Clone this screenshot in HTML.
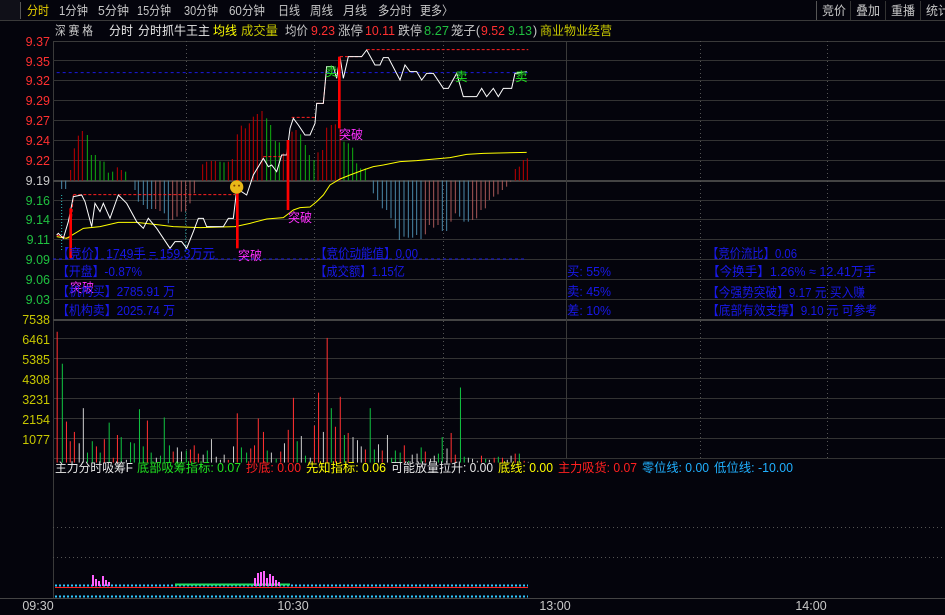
<!DOCTYPE html>
<html><head><meta charset="utf-8"><style>
body{margin:0;background:#04040c;width:945px;height:615px;overflow:hidden;}
svg text{font-family:"Liberation Sans","Noto Sans CJK SC",sans-serif;}
</style></head><body>
<svg width="945" height="615" style="position:absolute;left:0;top:0">
<rect width="945" height="615" fill="#04040c"/>
<rect x="0" y="0" width="20" height="20" fill="#101018"/>
<line x1="0" y1="20.5" x2="945" y2="20.5" stroke="#3a3a3a"/>
<line x1="20.5" y1="2" x2="20.5" y2="19" stroke="#555"/>
<line x1="816.5" y1="1" x2="816.5" y2="20" stroke="#555"/>
<line x1="850.5" y1="1" x2="850.5" y2="20" stroke="#333"/>
<line x1="885.5" y1="1" x2="885.5" y2="20" stroke="#333"/>
<line x1="920.5" y1="1" x2="920.5" y2="20" stroke="#333"/>
<g font-size="12.5" fill="#c8c8c8" lengthAdjust="spacingAndGlyphs">
<text x="27" y="15" fill="#e8d000" textLength="22" lengthAdjust="spacingAndGlyphs">分时</text>
<text x="59" y="15" textLength="29" lengthAdjust="spacingAndGlyphs">1分钟</text>
<text x="98" y="15" textLength="31" lengthAdjust="spacingAndGlyphs">5分钟</text>
<text x="137" y="15" textLength="34" lengthAdjust="spacingAndGlyphs">15分钟</text>
<text x="184" y="15" textLength="34" lengthAdjust="spacingAndGlyphs">30分钟</text>
<text x="229" y="15" textLength="36" lengthAdjust="spacingAndGlyphs">60分钟</text>
<text x="278" y="15" textLength="22" lengthAdjust="spacingAndGlyphs">日线</text>
<text x="310" y="15" textLength="23" lengthAdjust="spacingAndGlyphs">周线</text>
<text x="343" y="15" textLength="24" lengthAdjust="spacingAndGlyphs">月线</text>
<text x="378" y="15" textLength="34" lengthAdjust="spacingAndGlyphs">多分时</text>
<text x="420" y="15" textLength="33" lengthAdjust="spacingAndGlyphs">更多〉</text>
<text x="822" y="15" textLength="24" lengthAdjust="spacingAndGlyphs">竞价</text>
<text x="856" y="15" textLength="24" lengthAdjust="spacingAndGlyphs">叠加</text>
<text x="891" y="15" textLength="24" lengthAdjust="spacingAndGlyphs">重播</text>
<text x="926" y="15" textLength="24" lengthAdjust="spacingAndGlyphs">统计</text>
</g>
<g font-size="12.5">
<text x="55" y="35" fill="#c8c8c8" textLength="38" lengthAdjust="spacingAndGlyphs">深 赛 格</text>
<text x="109" y="35" fill="#e8e8e8" textLength="24" lengthAdjust="spacingAndGlyphs">分时</text>
<text x="138" y="35" fill="#e8e8e8" textLength="72" lengthAdjust="spacingAndGlyphs">分时抓牛王主</text>
<text x="213" y="35" fill="#ffff00" textLength="24" lengthAdjust="spacingAndGlyphs">均线</text>
<text x="241" y="35" fill="#c8c800" textLength="37" lengthAdjust="spacingAndGlyphs">成交量</text>
<text x="285" y="35" fill="#c8c8c8" textLength="23" lengthAdjust="spacingAndGlyphs">均价</text>
<text x="311" y="35" fill="#ff3030" textLength="24" lengthAdjust="spacingAndGlyphs">9.23</text>
<text x="338" y="35" fill="#c8c8c8" textLength="25" lengthAdjust="spacingAndGlyphs">涨停</text>
<text x="365" y="35" fill="#ff3030" textLength="30" lengthAdjust="spacingAndGlyphs">10.11</text>
<text x="398" y="35" fill="#c8c8c8" textLength="24" lengthAdjust="spacingAndGlyphs">跌停</text>
<text x="424" y="35" fill="#20c040" textLength="25" lengthAdjust="spacingAndGlyphs">8.27</text>
<text x="451" y="35" fill="#c8c8c8" textLength="29" lengthAdjust="spacingAndGlyphs">笼子(</text>
<text x="481" y="35" fill="#ff3030" textLength="24" lengthAdjust="spacingAndGlyphs">9.52</text>
<text x="508" y="35" fill="#20c040" textLength="24" lengthAdjust="spacingAndGlyphs">9.13</text>
<text x="533" y="35" fill="#c8c8c8">)</text>
<text x="540" y="35" fill="#c8c800" textLength="72" lengthAdjust="spacingAndGlyphs">商业物业经营</text>
</g>
<line x1="53" y1="41.5" x2="945" y2="41.5" stroke="#3a3a3a"/>
<line x1="53.5" y1="41" x2="53.5" y2="598" stroke="#3a3a3a"/>
<g stroke="#333">
<line x1="53" y1="60.5" x2="945" y2="60.5"/><line x1="53" y1="80.5" x2="945" y2="80.5"/>
<line x1="53" y1="100.5" x2="945" y2="100.5"/><line x1="53" y1="120.5" x2="945" y2="120.5"/>
<line x1="53" y1="140.5" x2="945" y2="140.5"/><line x1="53" y1="160.5" x2="945" y2="160.5"/>
<line x1="53" y1="200.5" x2="945" y2="200.5"/><line x1="53" y1="219.5" x2="945" y2="219.5"/>
<line x1="53" y1="239.5" x2="945" y2="239.5"/><line x1="53" y1="259.5" x2="945" y2="259.5"/>
<line x1="53" y1="279.5" x2="945" y2="279.5"/><line x1="53" y1="299.5" x2="945" y2="299.5"/>
<line x1="53" y1="338.5" x2="945" y2="338.5"/><line x1="53" y1="358.5" x2="945" y2="358.5"/>
<line x1="53" y1="378.5" x2="945" y2="378.5"/><line x1="53" y1="398.5" x2="945" y2="398.5"/>
<line x1="53" y1="418.5" x2="945" y2="418.5"/><line x1="53" y1="438.5" x2="945" y2="438.5"/>
<line x1="53" y1="458.5" x2="945" y2="458.5"/>
</g>
<line x1="53" y1="181" x2="945" y2="181" stroke="#444" stroke-width="2"/>
<line x1="53" y1="320" x2="945" y2="320" stroke="#444" stroke-width="2"/>
<line x1="0" y1="598.5" x2="945" y2="598.5" stroke="#444"/>
<line x1="566.5" y1="41" x2="566.5" y2="458" stroke="#3a3a3a"/>
<g stroke="#555" stroke-dasharray="1,3">
<line x1="186.5" y1="41" x2="186.5" y2="458"/><line x1="314.5" y1="41" x2="314.5" y2="458"/>
<line x1="443.5" y1="41" x2="443.5" y2="458"/><line x1="700.5" y1="41" x2="700.5" y2="458"/>
<line x1="827.5" y1="41" x2="827.5" y2="458"/>
<line x1="53" y1="527.5" x2="945" y2="527.5"/><line x1="53" y1="557.5" x2="945" y2="557.5"/>
</g>
<g font-size="12.5" text-anchor="end">
<g fill="#ff3030"><text x="50" y="46">9.37</text><text x="50" y="66">9.35</text><text x="50" y="85">9.32</text><text x="50" y="105">9.29</text><text x="50" y="125">9.27</text><text x="50" y="145">9.24</text><text x="50" y="165">9.22</text></g>
<text x="50" y="185" fill="#c8c8c8">9.19</text>
<g fill="#20c040"><text x="50" y="205">9.16</text><text x="50" y="224">9.14</text><text x="50" y="244">9.11</text><text x="50" y="264">9.09</text><text x="50" y="284">9.06</text><text x="50" y="304">9.03</text></g>
<g fill="#c8c800"><text x="50" y="324">7538</text><text x="50" y="344">6461</text><text x="50" y="364">5385</text><text x="50" y="384">4308</text><text x="50" y="404">3231</text><text x="50" y="424">2154</text><text x="50" y="444">1077</text></g>
</g>
<g transform="translate(50,35) scale(0.33333)">
<g stroke-width="3">
<g stroke="#c00000"><line x1="62" y1="437" x2="62" y2="405"/><line x1="73" y1="437" x2="73" y2="340"/><line x1="85" y1="437" x2="85" y2="302"/><line x1="97" y1="437" x2="97" y2="288"/><line x1="202" y1="437" x2="202" y2="397"/><line x1="214" y1="437" x2="214" y2="405"/><line x1="458" y1="437" x2="458" y2="388"/><line x1="470" y1="437" x2="470" y2="380"/><line x1="484" y1="437" x2="484" y2="378"/><line x1="496" y1="437" x2="496" y2="378"/><line x1="535" y1="437" x2="535" y2="380"/><line x1="547" y1="437" x2="547" y2="372"/><line x1="562" y1="437" x2="562" y2="298"/><line x1="574" y1="437" x2="574" y2="272"/><line x1="586" y1="437" x2="586" y2="280"/><line x1="598" y1="437" x2="598" y2="265"/><line x1="610" y1="437" x2="610" y2="245"/><line x1="622" y1="437" x2="622" y2="237"/><line x1="636" y1="437" x2="636" y2="228"/><line x1="700" y1="437" x2="700" y2="355"/><line x1="712" y1="437" x2="712" y2="318"/><line x1="726" y1="437" x2="726" y2="290"/><line x1="738" y1="437" x2="738" y2="285"/><line x1="804" y1="437" x2="804" y2="352"/><line x1="818" y1="437" x2="818" y2="345"/><line x1="830" y1="437" x2="830" y2="278"/><line x1="844" y1="437" x2="844" y2="270"/><line x1="856" y1="437" x2="856" y2="268"/><line x1="870" y1="437" x2="870" y2="280"/><line x1="1396" y1="437" x2="1396" y2="402"/><line x1="1408" y1="437" x2="1408" y2="395"/><line x1="1420" y1="437" x2="1420" y2="375"/><line x1="1432" y1="437" x2="1432" y2="370"/></g>
<g stroke="#10b010"><line x1="112" y1="437" x2="112" y2="300"/><line x1="124" y1="437" x2="124" y2="360"/><line x1="136" y1="437" x2="136" y2="360"/><line x1="150" y1="437" x2="150" y2="378"/><line x1="162" y1="437" x2="162" y2="380"/><line x1="175" y1="437" x2="175" y2="413"/><line x1="188" y1="437" x2="188" y2="410"/><line x1="227" y1="437" x2="227" y2="410"/><line x1="510" y1="437" x2="510" y2="380"/><line x1="522" y1="437" x2="522" y2="382"/><line x1="650" y1="437" x2="650" y2="250"/><line x1="662" y1="437" x2="662" y2="270"/><line x1="676" y1="437" x2="676" y2="318"/><line x1="688" y1="437" x2="688" y2="322"/><line x1="752" y1="437" x2="752" y2="298"/><line x1="766" y1="437" x2="766" y2="330"/><line x1="778" y1="437" x2="778" y2="360"/><line x1="792" y1="437" x2="792" y2="375"/><line x1="882" y1="437" x2="882" y2="320"/><line x1="895" y1="437" x2="895" y2="325"/><line x1="908" y1="437" x2="908" y2="338"/><line x1="920" y1="437" x2="920" y2="385"/><line x1="932" y1="437" x2="932" y2="400"/><line x1="946" y1="437" x2="946" y2="400"/></g>
<g stroke="#4a88a8"><line x1="35" y1="437" x2="35" y2="462"/><line x1="47" y1="437" x2="47" y2="462"/><line x1="255" y1="437" x2="255" y2="465"/><line x1="265" y1="437" x2="265" y2="500"/><line x1="280" y1="437" x2="280" y2="510"/><line x1="292" y1="437" x2="292" y2="522"/><line x1="305" y1="437" x2="305" y2="522"/><line x1="343" y1="437" x2="343" y2="535"/><line x1="355" y1="437" x2="355" y2="565"/><line x1="970" y1="437" x2="970" y2="475"/><line x1="983" y1="437" x2="983" y2="495"/><line x1="997" y1="437" x2="997" y2="520"/><line x1="1010" y1="437" x2="1010" y2="525"/><line x1="1023" y1="437" x2="1023" y2="550"/><line x1="1036" y1="437" x2="1036" y2="580"/><line x1="1048" y1="437" x2="1048" y2="615"/><line x1="1062" y1="437" x2="1062" y2="605"/><line x1="1075" y1="437" x2="1075" y2="608"/><line x1="1088" y1="437" x2="1088" y2="608"/><line x1="1100" y1="437" x2="1100" y2="600"/><line x1="1113" y1="437" x2="1113" y2="612"/><line x1="1177" y1="437" x2="1177" y2="588"/><line x1="1190" y1="437" x2="1190" y2="588"/><line x1="1229" y1="437" x2="1229" y2="545"/><line x1="1242" y1="437" x2="1242" y2="560"/><line x1="1255" y1="437" x2="1255" y2="560"/></g>
<g stroke="#a85858"><line x1="317" y1="437" x2="317" y2="522"/><line x1="330" y1="437" x2="330" y2="528"/><line x1="368" y1="437" x2="368" y2="555"/><line x1="381" y1="437" x2="381" y2="545"/><line x1="394" y1="437" x2="394" y2="530"/><line x1="407" y1="437" x2="407" y2="530"/><line x1="420" y1="437" x2="420" y2="505"/><line x1="433" y1="437" x2="433" y2="475"/><line x1="1126" y1="437" x2="1126" y2="598"/><line x1="1138" y1="437" x2="1138" y2="570"/><line x1="1151" y1="437" x2="1151" y2="578"/><line x1="1164" y1="437" x2="1164" y2="570"/><line x1="1203" y1="437" x2="1203" y2="560"/><line x1="1216" y1="437" x2="1216" y2="535"/><line x1="1268" y1="437" x2="1268" y2="555"/><line x1="1280" y1="437" x2="1280" y2="550"/><line x1="1293" y1="437" x2="1293" y2="525"/><line x1="1306" y1="437" x2="1306" y2="520"/><line x1="1318" y1="437" x2="1318" y2="495"/><line x1="1331" y1="437" x2="1331" y2="485"/><line x1="1344" y1="437" x2="1344" y2="478"/><line x1="1357" y1="437" x2="1357" y2="465"/><line x1="1370" y1="437" x2="1370" y2="455"/><line x1="1382" y1="437" x2="1382" y2="440"/></g>
</g>
<line x1="20" y1="113" x2="1435" y2="113" stroke="#1a1ae0" stroke-width="3" stroke-dasharray="9,9"/>
<g stroke="#ff2020" stroke-width="3" stroke-dasharray="9,6" fill="none">
<line x1="70" y1="479" x2="555" y2="479"/><line x1="640" y1="365" x2="700" y2="365"/>
<line x1="725" y1="247" x2="795" y2="247"/><line x1="870" y1="65" x2="935" y2="65"/>
<line x1="950" y1="44" x2="1435" y2="44"/>
<polyline points="20,600 60,610 70,480"/><polyline points="800,205 820,205 830,95"/>
</g>
<line x1="35" y1="480" x2="35" y2="650" stroke="#30c0c0" stroke-width="3" stroke-dasharray="3,6"/>
<line x1="407" y1="530" x2="407" y2="650" stroke="#30c0c0" stroke-width="3" stroke-dasharray="3,6"/>
<polyline fill="none" stroke="#ffff00" stroke-width="3" points="20,605 50,610 100,580 150,575 205,562 260,562 330,570 370,575 450,578 555,575 600,565 650,552 700,548 730,525 750,518 780,516 800,500 820,480 840,450 870,432 900,420 940,405 970,395 1000,390 1050,380 1100,377 1200,368 1250,358 1300,355 1430,352"/>
<polyline fill="none" stroke="#ffffff" stroke-width="3" points="20,600 25,595 40,610 55,560 70,485 95,480 105,500 125,575 135,505 150,530 160,505 180,550 205,480 230,505 260,560 280,580 295,550 320,580 360,640 375,620 395,620 410,640 430,590 445,550 460,550 470,575 520,575 535,550 550,550 560,465 575,470 590,480 610,420 640,370 655,395 665,390 680,410 695,360 710,360 720,280 730,250 745,270 765,300 780,300 795,265 800,205 820,205 830,95 850,95 860,130 870,65 880,130 895,65 935,65 950,45 975,90 990,90 1000,68 1015,68 1050,135 1065,90 1080,110 1100,110 1115,135 1130,115 1150,115 1180,160 1195,160 1220,115 1240,185 1280,185 1295,160 1310,185 1330,160 1345,185 1360,160 1385,160 1395,115 1430,110"/>
<g fill="#ff0000"><rect x="58" y="520" width="8" height="150"/><rect x="558" y="435" width="8" height="205"/><rect x="710" y="315" width="8" height="210"/><rect x="864" y="65" width="8" height="215"/></g>
<circle cx="560" cy="456" r="20" fill="#e8b818"/><circle cx="553" cy="452" r="3" fill="#804000"/><circle cx="567" cy="452" r="3" fill="#804000"/>
</g>
<g font-size="12.5" fill="#ff30ff">
<text x="70" y="292" textLength="24" lengthAdjust="spacingAndGlyphs">突破</text>
<text x="238" y="260" textLength="24" lengthAdjust="spacingAndGlyphs">突破</text>
<text x="288" y="222" textLength="24" lengthAdjust="spacingAndGlyphs">突破</text>
<text x="339" y="139" textLength="24" lengthAdjust="spacingAndGlyphs">突破</text>
</g>
<g font-size="12.5" fill="#20e020"><text x="325" y="76">卖</text><text x="455" y="81">卖</text><text x="515" y="81">卖</text></g>
<line x1="53" y1="259" x2="525" y2="259" stroke="#1a1ae0" stroke-dasharray="3,3"/>
<g font-size="13" fill="#1818e8">
<text x="57" y="258" textLength="158" lengthAdjust="spacingAndGlyphs">【竞价】1749手 = 159.3万元</text>
<text x="315" y="258" textLength="103" lengthAdjust="spacingAndGlyphs">【竞价动能值】0.00</text>
<text x="707" y="258" textLength="90" lengthAdjust="spacingAndGlyphs">【竞价流比】0.06</text>
<text x="57" y="276" textLength="85" lengthAdjust="spacingAndGlyphs">【开盘】-0.87%</text>
<text x="315" y="276" textLength="90" lengthAdjust="spacingAndGlyphs">【成交额】1.15亿</text>
<text x="567" y="276" textLength="44" lengthAdjust="spacingAndGlyphs">买: 55%</text>
<text x="707" y="276" textLength="169" lengthAdjust="spacingAndGlyphs">【今换手】1.26%  ≈  12.41万手</text>
<text x="57" y="296" textLength="118" lengthAdjust="spacingAndGlyphs">【机构买】2785.91 万</text>
<text x="567" y="296" textLength="44" lengthAdjust="spacingAndGlyphs">卖: 45%</text>
<text x="707" y="297" textLength="158" lengthAdjust="spacingAndGlyphs">【今强势突破】9.17 元 买入赚</text>
<text x="57" y="315" textLength="118" lengthAdjust="spacingAndGlyphs">【机构卖】2025.74 万</text>
<text x="567" y="315" textLength="44" lengthAdjust="spacingAndGlyphs">差: 10%</text>
<text x="707" y="315" textLength="170" lengthAdjust="spacingAndGlyphs">【底部有效支撑】9.10 元 可参考</text>
</g>
<g transform="translate(0,310) scale(0.3444)" stroke-width="3">
<g stroke="#ff3030"><line x1="166" y1="443" x2="166" y2="63"/><line x1="193" y1="443" x2="193" y2="324"/><line x1="204" y1="443" x2="204" y2="381"/><line x1="216" y1="443" x2="216" y2="354"/><line x1="280" y1="443" x2="280" y2="396"/><line x1="303" y1="443" x2="303" y2="375"/><line x1="329" y1="443" x2="329" y2="429"/><line x1="341" y1="443" x2="341" y2="363"/><line x1="428" y1="443" x2="428" y2="321"/><line x1="503" y1="443" x2="503" y2="411"/><line x1="553" y1="443" x2="553" y2="405"/><line x1="564" y1="443" x2="564" y2="393"/><line x1="576" y1="443" x2="576" y2="417"/><line x1="663" y1="443" x2="663" y2="435"/><line x1="689" y1="443" x2="689" y2="300"/><line x1="728" y1="443" x2="728" y2="402"/><line x1="739" y1="443" x2="739" y2="393"/><line x1="750" y1="443" x2="750" y2="315"/><line x1="765" y1="443" x2="765" y2="354"/><line x1="815" y1="443" x2="815" y2="411"/><line x1="837" y1="443" x2="837" y2="348"/><line x1="852" y1="443" x2="852" y2="255"/><line x1="913" y1="443" x2="913" y2="336"/><line x1="925" y1="443" x2="925" y2="240"/><line x1="950" y1="443" x2="950" y2="81"/><line x1="974" y1="443" x2="974" y2="339"/><line x1="988" y1="443" x2="988" y2="252"/><line x1="1011" y1="443" x2="1011" y2="357"/><line x1="1061" y1="443" x2="1061" y2="405"/><line x1="1110" y1="443" x2="1110" y2="408"/><line x1="1174" y1="443" x2="1174" y2="393"/><line x1="1235" y1="443" x2="1235" y2="411"/><line x1="1310" y1="443" x2="1310" y2="357"/><line x1="1322" y1="443" x2="1322" y2="420"/><line x1="1398" y1="443" x2="1398" y2="423"/><line x1="1435" y1="443" x2="1435" y2="429"/><line x1="1459" y1="443" x2="1459" y2="429"/><line x1="1496" y1="443" x2="1496" y2="417"/><line x1="1522" y1="443" x2="1522" y2="438"/></g>
<g stroke="#10c040"><line x1="181" y1="443" x2="181" y2="156"/><line x1="254" y1="443" x2="254" y2="414"/><line x1="268" y1="443" x2="268" y2="381"/><line x1="291" y1="443" x2="291" y2="414"/><line x1="317" y1="443" x2="317" y2="327"/><line x1="352" y1="443" x2="352" y2="369"/><line x1="379" y1="443" x2="379" y2="384"/><line x1="390" y1="443" x2="390" y2="387"/><line x1="405" y1="443" x2="405" y2="288"/><line x1="416" y1="443" x2="416" y2="396"/><line x1="439" y1="443" x2="439" y2="414"/><line x1="466" y1="443" x2="466" y2="423"/><line x1="477" y1="443" x2="477" y2="312"/><line x1="492" y1="443" x2="492" y2="393"/><line x1="541" y1="443" x2="541" y2="408"/><line x1="602" y1="443" x2="602" y2="408"/><line x1="701" y1="443" x2="701" y2="399"/><line x1="716" y1="443" x2="716" y2="414"/><line x1="776" y1="443" x2="776" y2="408"/><line x1="802" y1="443" x2="802" y2="432"/><line x1="863" y1="443" x2="863" y2="381"/><line x1="887" y1="443" x2="887" y2="423"/><line x1="962" y1="443" x2="962" y2="285"/><line x1="1000" y1="443" x2="1000" y2="363"/><line x1="1075" y1="443" x2="1075" y2="285"/><line x1="1087" y1="443" x2="1087" y2="405"/><line x1="1137" y1="443" x2="1137" y2="429"/><line x1="1148" y1="443" x2="1148" y2="408"/><line x1="1162" y1="443" x2="1162" y2="414"/><line x1="1186" y1="443" x2="1186" y2="438"/><line x1="1223" y1="443" x2="1223" y2="399"/><line x1="1273" y1="443" x2="1273" y2="417"/><line x1="1284" y1="443" x2="1284" y2="369"/><line x1="1337" y1="443" x2="1337" y2="225"/><line x1="1348" y1="443" x2="1348" y2="426"/><line x1="1410" y1="443" x2="1410" y2="432"/><line x1="1447" y1="443" x2="1447" y2="426"/><line x1="1508" y1="443" x2="1508" y2="417"/></g>
<g stroke="#c8c8c8"><line x1="230" y1="443" x2="230" y2="387"/><line x1="242" y1="443" x2="242" y2="285"/><line x1="367" y1="443" x2="367" y2="435"/><line x1="454" y1="443" x2="454" y2="429"/><line x1="515" y1="443" x2="515" y2="399"/><line x1="527" y1="443" x2="527" y2="411"/><line x1="590" y1="443" x2="590" y2="420"/><line x1="614" y1="443" x2="614" y2="375"/><line x1="628" y1="443" x2="628" y2="426"/><line x1="640" y1="443" x2="640" y2="435"/><line x1="651" y1="443" x2="651" y2="420"/><line x1="678" y1="443" x2="678" y2="396"/><line x1="788" y1="443" x2="788" y2="414"/><line x1="826" y1="443" x2="826" y2="387"/><line x1="875" y1="443" x2="875" y2="366"/><line x1="901" y1="443" x2="901" y2="429"/><line x1="939" y1="443" x2="939" y2="354"/><line x1="1025" y1="443" x2="1025" y2="369"/><line x1="1038" y1="443" x2="1038" y2="378"/><line x1="1049" y1="443" x2="1049" y2="396"/><line x1="1099" y1="443" x2="1099" y2="390"/><line x1="1125" y1="443" x2="1125" y2="363"/><line x1="1197" y1="443" x2="1197" y2="420"/><line x1="1211" y1="443" x2="1211" y2="417"/><line x1="1250" y1="443" x2="1250" y2="432"/><line x1="1261" y1="443" x2="1261" y2="423"/><line x1="1298" y1="443" x2="1298" y2="402"/><line x1="1360" y1="443" x2="1360" y2="429"/><line x1="1372" y1="443" x2="1372" y2="432"/><line x1="1386" y1="443" x2="1386" y2="438"/><line x1="1421" y1="443" x2="1421" y2="435"/><line x1="1473" y1="443" x2="1473" y2="435"/><line x1="1484" y1="443" x2="1484" y2="423"/><line x1="1534" y1="443" x2="1534" y2="441"/></g>
</g>
<g font-size="12.5">
<text x="55" y="472" fill="#e8e8e8" textLength="78" lengthAdjust="spacingAndGlyphs">主力分时吸筹F</text>
<text x="137" y="472" fill="#20e020" textLength="104" lengthAdjust="spacingAndGlyphs">底部吸筹指标: 0.07</text>
<text x="246" y="472" fill="#ff2020" textLength="55" lengthAdjust="spacingAndGlyphs">抄底: 0.00</text>
<text x="306" y="472" fill="#ffff00" textLength="80" lengthAdjust="spacingAndGlyphs">先知指标: 0.06</text>
<text x="391" y="472" fill="#e8e8e8" textLength="102" lengthAdjust="spacingAndGlyphs">可能放量拉升: 0.00</text>
<text x="498" y="472" fill="#ffff00" textLength="55" lengthAdjust="spacingAndGlyphs">底线: 0.00</text>
<text x="558" y="472" fill="#ff2020" textLength="79" lengthAdjust="spacingAndGlyphs">主力吸货: 0.07</text>
<text x="642" y="472" fill="#20b0ff" textLength="67" lengthAdjust="spacingAndGlyphs">零位线: 0.00</text>
<text x="714" y="472" fill="#20b0ff" textLength="79" lengthAdjust="spacingAndGlyphs">低位线: -10.00</text>
</g>
<line x1="55" y1="585.5" x2="528" y2="585.5" stroke="#30c8ff" stroke-width="2" stroke-dasharray="2,2"/>
<line x1="55" y1="587.5" x2="528" y2="587.5" stroke="#ff2020"/>
<line x1="175" y1="584.5" x2="290" y2="584.5" stroke="#20e060" stroke-width="2"/>
<line x1="55" y1="596.5" x2="528" y2="596.5" stroke="#30c8ff" stroke-width="2" stroke-dasharray="2,2"/>
<g fill="#ff60ff">
<rect x="92" y="575" width="2" height="11"/><rect x="95" y="579" width="2" height="7"/><rect x="98" y="581" width="2" height="5"/><rect x="102" y="576" width="2" height="10"/><rect x="105" y="580" width="2" height="6"/><rect x="108" y="582" width="2" height="4"/>
<rect x="254" y="578" width="2" height="8"/><rect x="257" y="573" width="2" height="13"/><rect x="260" y="572" width="2" height="14"/><rect x="263" y="571" width="2" height="15"/><rect x="266" y="578" width="2" height="8"/><rect x="269" y="574" width="2" height="12"/><rect x="272" y="576" width="2" height="10"/><rect x="275" y="580" width="2" height="6"/><rect x="278" y="582" width="2" height="4"/>
</g>
<g fill="#c8c8c8" font-size="12.5" text-anchor="middle">
<text x="38" y="610">09:30</text><text x="293" y="610">10:30</text><text x="555" y="610">13:00</text><text x="811" y="610">14:00</text>
</g>
</svg>
</body></html>
